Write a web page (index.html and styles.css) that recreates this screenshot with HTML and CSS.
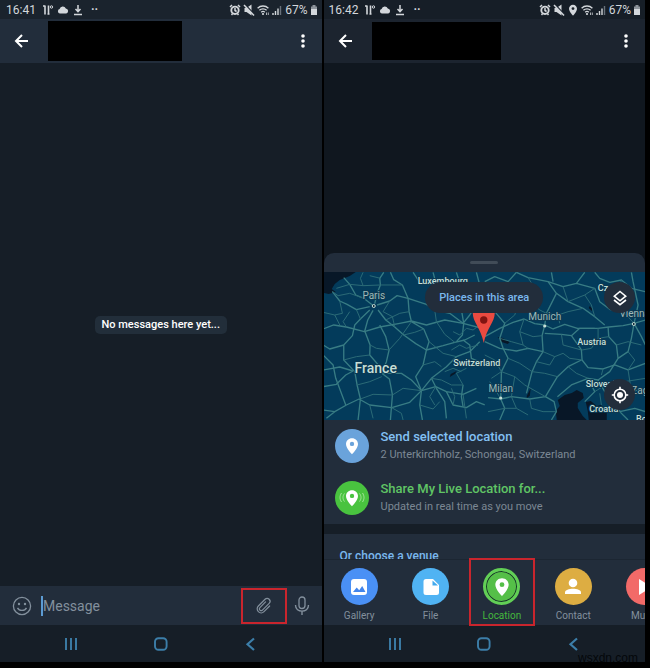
FILE: index.html
```
<!DOCTYPE html>
<html lang="en">
<head>
  <meta charset="UTF-8">
  <meta name="viewport" content="width=device-width, initial-scale=1.0">
  <title>Send location</title>
  <link rel="stylesheet" href="styles.css">
</head>
<body>

<!-- Shared icons -->
<svg class="sprite" aria-hidden="true">
  <symbol id="i-app" viewBox="0 0 12 12"><path d="M1 2h2M3 1.500v9M6.500 1.500v9M5.500 10h2" fill="none" stroke="currentColor" stroke-width="1.600"/><circle cx="9.500" cy="3" r="1.200" fill="none" stroke="currentColor"/></symbol>
  <symbol id="i-cloud" viewBox="0 0 12 12"><path d="M3 9.500a2.300 2.300 0 0 1-.4-4.500 3.300 3.300 0 0 1 6.200-.4A2.500 2.500 0 0 1 9.300 9.500z" fill="currentColor"/></symbol>
  <symbol id="i-down" viewBox="0 0 12 12"><path d="M6 1v6M3.500 5 6 7.600 8.500 5M2 10.500h8" fill="none" stroke="currentColor" stroke-width="1.500"/></symbol>
  <symbol id="i-alarm" viewBox="0 0 12 12"><circle cx="6" cy="6.300" r="3.700" fill="none" stroke="currentColor" stroke-width="1.900"/><path d="M6 4v2.500l1.600 1M1 3l2-2M11 3 9 1M2.500 11l1-1.200M9.500 11l-1-1.200" fill="none" stroke="currentColor" stroke-width="1.500"/></symbol>
  <symbol id="i-mute" viewBox="0 0 12 12"><path d="M1.500 4h2L8.500.5v11L3.500 8h-2z" fill="currentColor"/><path d="m2.500 1 9 9.500" stroke="#1a232d" stroke-width="1.400"/><path d="m1 1 10 10.500" stroke="currentColor" stroke-width="1.500"/></symbol>
  <symbol id="i-wifi" viewBox="0 0 12 12"><path d="M.6 4.300a7.500 7.500 0 0 1 10.800 0M2.400 6.300a5.100 5.100 0 0 1 7.200 0M4.200 8.200a2.600 2.600 0 0 1 3.600 0" fill="none" stroke="currentColor" stroke-width="1.300"/><circle cx="6" cy="10" r="1.100" fill="currentColor"/><path d="M9.500 8.500v2.500M11.300 8.500v2.500" stroke="currentColor" stroke-width=".8"/></symbol>
  <symbol id="i-signal" viewBox="0 0 12 12"><path d="M2 9v2M4.500 7v4M7 4.500V11" stroke="currentColor" stroke-width="1.400"/><path d="M9.500 2v9" stroke="#69717a" stroke-width="1.400"/></symbol>
  <symbol id="i-battery" viewBox="0 0 8 12"><path d="M1 2.500h1.500V1h3v1.500H7V11H1z" fill="#8d949b"/><path d="M1 5h6v6H1z" fill="currentColor"/></symbol>
  <symbol id="i-pin" viewBox="0 0 24 24"><path d="M12 1.500c-4.500 0-8 3.500-8 7.800C4 15 12 23 12 23s8-8 8-13.700c0-4.300-3.500-7.800-8-7.800zm0 10.600a2.900 2.900 0 1 1 0-5.800 2.900 2.900 0 0 1 0 5.800z" fill="currentColor"/></symbol>
  <symbol id="i-back" viewBox="0 0 16 16"><path d="M14 8H2.500M8 2 2 8l6 6" fill="none" stroke="currentColor" stroke-width="2"/></symbol>
  <symbol id="i-more" viewBox="0 0 6 16"><circle cx="3" cy="3" r="1.800" fill="currentColor"/><circle cx="3" cy="8" r="1.800" fill="currentColor"/><circle cx="3" cy="13" r="1.800" fill="currentColor"/></symbol>
  <symbol id="i-recent" viewBox="0 0 16 16"><path d="M3 2v12M8 2v12M13 2v12" stroke="currentColor" stroke-width="1.900"/></symbol>
  <symbol id="i-home" viewBox="0 0 16 16"><rect x="2" y="2.200" width="11.600" height="11.600" rx="3.500" fill="none" stroke="currentColor" stroke-width="1.900"/></symbol>
  <symbol id="i-chevron" viewBox="0 0 16 16"><path d="m11 2.500-6.500 5.700L11 14" fill="none" stroke="currentColor" stroke-width="2.200"/></symbol>
</svg>

<main class="screens">

  <section class="phone" aria-label="Empty chat">
    <div class="status">
      <span>16:41</span>
      <svg class="s-icon"><use href="#i-app"/></svg>
      <svg class="s-icon"><use href="#i-cloud"/></svg>
      <svg class="s-icon"><use href="#i-down"/></svg>
      <span class="dots">··</span>
      <div class="status-right">
        <svg class="s-icon"><use href="#i-alarm"/></svg>
        <svg class="s-icon"><use href="#i-mute"/></svg>
        <svg class="s-icon"><use href="#i-wifi"/></svg>
        <svg class="s-icon"><use href="#i-signal"/></svg>
        <span>67%</span>
        <svg class="s-icon battery"><use href="#i-battery"/></svg>
      </div>
    </div>
    <header class="topbar">
      <button class="icon-btn" aria-label="Back"><svg class="back"><use href="#i-back"/></svg></button>
      <div class="name"></div>
      <button class="icon-btn" aria-label="More options"><svg class="more"><use href="#i-more"/></svg></button>
    </header>
    <div class="chat">
      <p class="empty">No messages here yet...</p>
    </div>
    <form class="composer">
      <button type="button" class="icon-btn" aria-label="Emoji">
        <svg class="emoji" viewBox="0 0 20 20"><circle cx="10" cy="10" r="8.600" fill="none" stroke="currentColor" stroke-width="1.300"/><circle cx="7" cy="8" r="1.200" fill="currentColor"/><circle cx="13" cy="8" r="1.200" fill="currentColor"/><path d="M5.500 11.800c1.800 3.400 7.200 3.400 9 0" fill="none" stroke="currentColor" stroke-width="1.400"/></svg>
      </button>
      <input class="message" type="text" placeholder="Message" aria-label="Message">
      <button type="button" class="attach marked" aria-label="Attach">
        <svg class="clip" viewBox="0 0 20 20"><path d="M14 6v8a4 4 0 0 1-8 0V4.500a2.900 2.900 0 0 1 5.800 0V14a1.800 1.800 0 0 1-3.600 0V6" transform="rotate(45 10 10)" fill="none" stroke="currentColor" stroke-width="1.200" stroke-linecap="round"/></svg>
      </button>
      <button type="button" class="icon-btn" aria-label="Record voice">
        <svg class="mic" viewBox="0 0 16 20"><rect x="5" y="1" width="6" height="11.500" rx="3" fill="none" stroke="currentColor" stroke-width="1.300"/><path d="M1.500 9c0 8.200 13 8.200 13 0M8 15.500V19" fill="none" stroke="currentColor" stroke-width="1.400"/></svg>
      </button>
    </form>
    <nav class="navbar">
      <button aria-label="Recent apps"><svg><use href="#i-recent"/></svg></button>
      <button aria-label="Home"><svg><use href="#i-home"/></svg></button>
      <button aria-label="Back"><svg><use href="#i-chevron"/></svg></button>
    </nav>
  </section>

  <section class="phone dimmed" aria-label="Share location">
    <div class="status">
      <span>16:42</span>
      <svg class="s-icon"><use href="#i-app"/></svg>
      <svg class="s-icon"><use href="#i-cloud"/></svg>
      <svg class="s-icon"><use href="#i-down"/></svg>
      <span class="dots">··</span>
      <div class="status-right">
        <svg class="s-icon"><use href="#i-alarm"/></svg>
        <svg class="s-icon"><use href="#i-mute"/></svg>
        <svg class="s-icon"><use href="#i-pin"/></svg>
        <svg class="s-icon"><use href="#i-wifi"/></svg>
        <svg class="s-icon"><use href="#i-signal"/></svg>
        <span>67%</span>
        <svg class="s-icon battery"><use href="#i-battery"/></svg>
      </div>
    </div>
    <header class="topbar">
      <button class="icon-btn" aria-label="Back"><svg class="back"><use href="#i-back"/></svg></button>
      <div class="name short"></div>
      <button class="icon-btn" aria-label="More options"><svg class="more"><use href="#i-more"/></svg></button>
    </header>
    <div class="chat"></div>

    <div class="sheet">
      <div class="grip"></div>
      <div class="map">
        <svg class="map-canvas" viewBox="0 0 322 148" preserveAspectRatio="xMidYMid slice" role="img" aria-label="Map of central Europe">
          <rect width="322" height="148" fill="#033b5b"/>
          <!-- sea and lakes -->
          <g fill="#081727">
            <path d="M0 0h32l-6 4-10 4-5 4-3 5 4 3-7 2-5-1z"/>
            <path d="m234 128 7-5 7-2 5-3 6 3 1 5-6 5 0 5 5 8 4 4h-30l-1-9 4-5z"/>
            <path d="m262 130 5-1 6 5 4-1 6 5v10h-18l-1-9z"/>
            <path d="m174 65 5 1 7 4-2 2-6-2zM203 124l4-8-1 8-3 2zM266 34l3 3-1 2-3-3zM127 102l6-3-2 3-5 3z"/>
          </g>
          <!-- western roads -->
          <g class="roads" transform="translate(-4 -27) scale(.3333)">
            <path d="M162 183 132 160 108 150 90 118 72 98M165 176 172 145 182 120 180 100 192 82M172 180 210 168 232 152 265 160 320 178 345 195 390 205 430 235 495 252"/>
            <path d="M265 160 248 120 222 104 212 82M175 195 198 225 225 246 252 270 288 296 320 315 370 302 405 292 435 285 465 270M160 196 144 225 135 258 151 300 150 330 180 365 186 385 209 402 218 450 212 525"/>
            <path d="M150 185 110 194 82 178 60 168 38 140M150 195 122 222 105 240 98 272 72 300 30 312 10 300M72 300 72 345 105 380 112 420 122 462 115 525"/>
            <path d="M10 252 42 240 80 246 134 260 180 246 240 235 275 228 320 240 375 225 430 235M265 160 268 200 275 230 312 252 328 290 320 315 310 360 288 395 305 437 300 480 308 525"/>
            <path d="M180 240 198 275 208 315 200 350 185 385M10 375 60 366 100 378M180 385 245 385 275 405 305 437 335 400 380 365 410 335 450 320 480 290"/>
            <path d="M305 437 270 472 216 488 150 480 118 462 80 480 45 500 10 495M305 437 348 425 380 440 430 448 470 430M10 425 50 418 78 390 100 378M45 500 20 520"/>
            <path d="M410 82 422 120 420 165 432 235 428 270 410 290M430 235 450 210 470 180 480 120 470 82M340 82 350 120 300 112 280 82M335 400 350 430 375 470 380 520M380 440 400 480 440 488 470 470 495 480"/>
            <path d="M430 285 450 300 455 340 490 355M430 420 425 455 430 485M10 330 40 360 48 400 78 480"/>
            <g class="minor">
              <path d="M50 130 90 118 130 122 182 120 248 120M38 140 55 152 90 145 132 160M90 200 70 230 80 246M10 202 45 210 60 240M60 168 68 205 45 210M110 194 122 222M198 225 240 205 268 200M130 122 122 100 130 82M182 100 150 92"/>
              <path d="M225 246 218 215 190 200 210 168M275 230 240 280 208 315 170 310 151 300M252 270 285 262 312 252M328 290 370 325 410 335M345 195 350 230 375 268 405 292M390 205 380 170 400 150 420 165 450 150M72 345 110 335 150 330"/>
              <path d="M112 420 150 410 186 395M122 462 160 448 218 450 250 430 305 437M216 488 245 505 250 525M150 480 160 520M300 480 340 492 360 470M310 360 345 350 365 365M335 400 365 405 395 420 430 420 410 385 440 370M348 425 330 455 345 480M400 260 420 270 440 250 460 255 480 240M395 315 420 300 440 310 475 300M375 380 400 370 425 380M430 448 440 520M395 430 405 455 400 480"/>
            </g>
          </g>
          <!-- eastern roads -->
          <g class="roads" transform="translate(161 -27) scale(.3333)">
            <path d="M95 82 130 98 190 110 215 145 200 175 185 205 180 240 150 236 118 222 85 232 45 250 0 275M180 240 205 252 240 238 278 250 340 250 372 246 415 242 448 235 482 225"/>
            <path d="M215 145 250 170 295 190 330 215 360 240M190 110 235 125 275 115 300 82M275 115 330 130 345 170 378 195M330 82 345 100 375 112 410 105 440 130 482 140"/>
            <path d="M180 240 172 272 175 320 155 350 142 380 125 445M175 320 130 310 95 318 45 310 0 290M180 265 230 268 260 272 290 315 292 345 310 368 355 372 390 360 430 375 482 355"/>
            <path d="M260 272 285 250 330 250M290 345 250 365 218 395 200 425 182 455 135 462 80 455 48 462 10 458M48 462 60 490 45 525M182 455 208 470 215 500 200 525M218 455 260 420 310 400 340 405 375 380 400 340 395 300 372 275 370 246"/>
            <path d="M310 400 330 440 300 470M340 405 360 440 400 470 440 440 482 430M400 340 430 320 440 280 448 235M400 470 405 500 430 525M405 500 450 490 482 500M0 180 30 200 60 235 45 280 55 310 70 340 50 380 48 462"/>
            <path d="M0 110 30 95 70 110 95 82M200 82 205 110M440 82 445 110 460 180 448 235 470 275 482 300"/>
            <g class="minor">
              <path d="M60 235 90 210 100 180 130 165 150 130 130 98M100 180 60 165 30 200M130 165 165 195 185 205M185 205 220 210 250 200 295 190M220 210 225 235M235 125 250 170 300 150 330 130M300 150 320 180 330 215"/>
              <path d="M118 222 105 260 115 300 130 310M105 260 145 275 172 272M45 280 80 290 115 300M175 320 210 335 235 325 255 340 292 345M210 335 195 360 155 350M142 380 180 385 218 395M70 340 105 355 142 380M0 330 30 345 50 380 20 400M50 380 90 395 120 420 182 455"/>
              <path d="M230 268 235 300 290 315M340 250 340 280 320 310 292 315M340 280 372 275M395 300 430 290 470 300M430 320 450 345 430 375 440 440M355 372 350 390M250 365 275 385 310 400M90 395 80 455M15 410 35 440 48 462M80 455 95 490 130 510M135 462 140 490 175 500 215 500M60 490 95 490M10 500 60 490M330 440 370 415 420 410 482 400M345 445 350 480M378 195 420 205 448 235M410 105 400 150 378 195"/>
            </g>
          </g>
          <g class="labels">
            <circle cx="50" cy="34" r="1.500" class="ring"/>
            <circle cx="221" cy="54" r="1.600"/>
            <circle cx="177" cy="126" r="1.600"/>
            <circle cx="310" cy="52" r="1.500" class="ring"/>
            <text x="50" y="27" class="city">Paris</text>
            <text x="221" y="48" class="city">Munich</text>
            <text x="177" y="120" class="city">Milan</text>
            <text x="311" y="45" class="city">Vienna</text>
            <text x="316" y="122" class="city">Zag</text>
            <text x="119" y="12">Luxembourg</text>
            <text x="153" y="94">Switzerland</text>
            <text x="268" y="73">Austria</text>
            <text x="290" y="19">Czechia</text>
            <text x="279" y="115">Slovenia</text>
            <text x="280" y="140">Croatia</text>
            <text x="326" y="150">Bosnia</text>
            <text x="52" y="101" class="big">France</text>
          </g>
          <g class="marker">
            <path d="M160 30c-6 0-11 5-11 11 0 9 8 15 11 30 3-15 11-21 11-30 0-6-5-11-11-11z" fill="#ea4a40"/>
            <circle cx="160" cy="48" r="3.700" fill="#811411"/>
          </g>
        </svg>
        <button class="places">Places in this area</button>
        <button class="map-btn layers" aria-label="Map layers">
          <svg viewBox="0 0 18 18"><path d="m9 2.500 5.700 4.700L9 11.800 3.300 7.200zM3 11l6 4.700 6-4.700" fill="none" stroke="currentColor" stroke-width="1.600"/></svg>
        </button>
        <button class="map-btn locate" aria-label="My location">
          <svg viewBox="0 0 18 18"><circle cx="9" cy="9" r="5.800" fill="none" stroke="currentColor" stroke-width="1.600"/><circle cx="9" cy="9" r="3" fill="currentColor"/><path d="M9 .8v3M9 14.200v3M.8 9h3M14.200 9h3" stroke="currentColor" stroke-width="1.600"/></svg>
        </button>
      </div>

      <div class="options">
        <button class="option">
          <span class="badge blue"><svg><use href="#i-pin"/></svg></span>
          <span class="option-text">
            <strong>Send selected location</strong>
            <small>2 Unterkirchholz, Schongau, Switzerland</small>
          </span>
        </button>
        <button class="option live">
          <span class="badge green">
            <svg class="waves" viewBox="0 0 34 34"><path d="M9.500 12.500c-2 2.500-2 5.500 0 8M24.500 12.500c2 2.500 2 5.500 0 8M6.500 12c-2 3-2 6 0 9M27.500 12c2 3 2 6 0 9" fill="none" stroke="#a5e59b" stroke-width="1"/></svg>
            <svg><use href="#i-pin"/></svg>
          </span>
          <span class="option-text">
            <strong>Share My Live Location for...</strong>
            <small>Updated in real time as you move</small>
          </span>
        </button>
      </div>

      <h2 class="venue">Or choose a venue</h2>

      <div class="tabs">
        <button class="tab">
          <span class="disc gallery"><svg viewBox="0 0 20 20"><rect x="2" y="2" width="16" height="16" rx="3" fill="#fff"/><path d="m4 15 3.700-4.500 2.500 2.800 3-4.300 3.300 6z" fill="#4285ec"/></svg></span>
          Gallery
        </button>
        <button class="tab">
          <span class="disc file"><svg viewBox="0 0 20 20"><path d="M5 2h7l6 6v7.500a2.500 2.500 0 0 1-2.500 2.500H5a2.500 2.500 0 0 1-2.500-2.500v-11A2.500 2.500 0 0 1 5 2z" fill="#fff"/><path d="M11.500 3.500v5H17z" fill="#42a9ed"/></svg></span>
          File
        </button>
        <button class="tab active marked">
          <span class="disc location"><svg><use href="#i-pin"/></svg></span>
          Location
        </button>
        <button class="tab">
          <span class="disc contact"><svg viewBox="0 0 20 20"><circle cx="10" cy="6" r="4.300" fill="#fff"/><path d="M2 17v-1.500c0-5 16-5 16 0V17z" fill="#fff"/></svg></span>
          Contact
        </button>
        <button class="tab">
          <span class="disc music"><svg viewBox="0 0 20 20"><path d="M4 2v16l13-8z" fill="#fff"/></svg></span>
          Music
        </button>
      </div>
    </div>

    <nav class="navbar">
      <button aria-label="Recent apps"><svg><use href="#i-recent"/></svg></button>
      <button aria-label="Home"><svg><use href="#i-home"/></svg></button>
      <button aria-label="Back"><svg><use href="#i-chevron"/></svg></button>
    </nav>
  </section>

</main>

<div class="watermark">wsxdn.com</div>

</body>
</html>
```
FILE: styles.css
```
* {
  box-sizing: border-box;
}

body {
  margin: 0;
  background: #000;
  color: #fff;
  font-family: Roboto, "Liberation Sans", sans-serif;
  font-size: 12px;
}

button {
  padding: 0;
  border: none;
  background: none;
  color: inherit;
  font: inherit;
  cursor: pointer;
}

svg {
  display: block;
}

.sprite {
  position: absolute;
  width: 0;
  height: 0;
}

.screens {
  display: grid;
  grid-template-columns: minmax(0, 1fr) minmax(0, 1fr);
  gap: 2px;
  min-height: 100vh;
  padding: 0 5px 6px 0;
}

.phone {
  display: flex;
  flex-direction: column;
  background: #161e27;
}

.phone.dimmed {
  background: #10171f;
}

/* status bar */
.status {
  display: flex;
  align-items: center;
  gap: 3px;
  height: 19px;
  padding: 0 4px 0 6px;
  background: #1a232d;
  color: #d3d7db;
}

.dimmed .status {
  padding-left: 5px;
  background: #161e27;
}

.status > .s-icon:first-of-type {
  margin-left: 3px;
}

.status-right {
  display: flex;
  align-items: center;
  gap: 2px;
  margin-left: auto;
}

.s-icon {
  width: 12px;
  height: 12px;
}

.s-icon.battery {
  width: 8px;
}

.dots {
  margin-left: 4px;
  font-weight: 700;
}

/* chat header */
.topbar {
  display: flex;
  align-items: center;
  height: 44px;
  padding: 0 8px 0 4px;
  background: #222d3b;
}

.dimmed .topbar {
  background: #1c242f;
}

.icon-btn {
  display: grid;
  place-items: center;
  min-width: 22px;
}

.back {
  width: 16px;
  height: 16px;
}

.topbar .icon-btn:first-child {
  width: 36px;
}

.more {
  width: 6px;
  height: 16px;
}

.name {
  width: 134px;
  height: 40px;
  margin: 0 auto 0 8px;
  background: #000;
}

.name.short {
  width: 129px;
  height: 38px;
}

.chat {
  flex: 1;
  display: grid;
  place-items: center;
}

.empty {
  margin: 0;
  padding: 0 7px;
  border-radius: 5px;
  background: #222e3a;
  font-size: 11px;
  font-weight: 500;
  line-height: 18px;
}

/* message field */
.composer {
  display: flex;
  align-items: center;
  height: 39px;
  padding: 0 9px 0 11px;
  background: #222d3b;
  color: #83909d;
}

.emoji {
  width: 20px;
  height: 20px;
}

.message {
  flex: 1;
  min-width: 0;
  height: 20px;
  margin-left: 8px;
  padding: 0;
  border: none;
  border-left: 2px solid #5c9bd3;
  outline: none;
  background: none;
  color: #fff;
  font: 14px Roboto, "Liberation Sans", sans-serif;
}

.message::placeholder {
  color: #83909d;
  opacity: 1;
}

.attach {
  display: grid;
  place-items: center;
  width: 46px;
  height: 36px;
  margin-right: 4px;
}

.attach.marked {
  border: 2px solid #c9252d;
}

.clip {
  width: 20px;
  height: 20px;
}

.mic {
  width: 16px;
  height: 20px;
}

/* system navigation */
.navbar {
  display: flex;
  justify-content: space-between;
  align-items: center;
  height: 37px;
  padding: 0 60px;
  background: #161e27;
  color: #3c7ea9;
}

.navbar button {
  padding: 8px 3px;
}

.navbar svg {
  width: 16px;
  height: 16px;
}

/* attachment sheet */
.sheet {
  border-radius: 10px 10px 0 0;
  background: #222d3b;
}

.grip {
  width: 28px;
  height: 3px;
  margin: 0 auto;
  border-radius: 2px;
  background: #414c58;
}

.sheet > .grip {
  margin: 8px auto;
}

.map {
  position: relative;
  height: 148px;
  overflow: hidden;
}

.map-canvas {
  width: 100%;
  height: 100%;
}

.roads {
  fill: none;
  stroke: #387c84;
  stroke-width: 4;
  stroke-linejoin: round;
}

.roads .minor {
  stroke: #2b6a76;
  stroke-width: 3;
}

.labels {
  fill: #c6dfd7;
  font-size: 9px;
  font-weight: 500;
  text-anchor: middle;
}

.labels text {
  paint-order: stroke;
  stroke: #0b3852;
  stroke-width: 2px;
}

.labels .city {
  fill: #9fb8b7;
  font-size: 10px;
  font-weight: 400;
}

.labels .big {
  font-size: 14px;
}

.ring {
  fill: #0b2033;
  stroke: #c6dfd7;
}

.places {
  position: absolute;
  top: 10px;
  left: 50%;
  height: 31px;
  padding: 0 14px;
  border-radius: 16px;
  background: #222d3b;
  color: #7ab8ee;
  font-size: 11px;
  font-weight: 500;
  white-space: nowrap;
  transform: translateX(-50%);
}

.map-btn {
  position: absolute;
  right: 10px;
  display: grid;
  place-items: center;
  width: 31px;
  height: 31px;
  border-radius: 50%;
  background: #222d3b;
}

.map-btn svg {
  width: 18px;
  height: 18px;
}

.layers {
  top: 10px;
}

.locate {
  bottom: 10px;
}

.options {
  border-bottom: 10px solid #161e27;
}

.option {
  display: flex;
  align-items: center;
  gap: 12px;
  width: 100%;
  height: 52px;
  padding: 0 11px;
  text-align: left;
}

.badge {
  position: relative;
  display: grid;
  place-items: center;
  flex: none;
  width: 34px;
  height: 34px;
  border-radius: 50%;
}

.badge svg {
  width: 18px;
  height: 18px;
}

.badge .waves {
  position: absolute;
  inset: 0;
  width: 34px;
  height: 34px;
}

.blue {
  background: #6aa3db;
}

.green {
  background: #49c33f;
}

.option-text strong,
.option-text small {
  display: block;
}

.option-text strong {
  color: #82c0f4;
  font-size: 13px;
  font-weight: 500;
  line-height: 18px;
}

.option-text small {
  color: #7c8894;
  font-size: 11px;
  line-height: 18px;
}

.option.live strong {
  color: #60c565;
}

.venue {
  height: 25px;
  margin: 0;
  padding: 14px 16px 0;
  overflow: hidden;
  color: #7ab8ee;
  font-size: 12px;
  font-weight: 500;
  line-height: 16px;
}

/* attachment types */
.tabs {
  display: flex;
  height: 66px;
  overflow-x: clip;
  border-top: 1px solid #1c2632;
}

.tab {
  position: relative;
  display: flex;
  flex: 0 0 22.2%;
  flex-direction: column;
  align-items: center;
  gap: 4px;
  padding-top: 8px;
  color: #83909d;
  font-size: 10px;
  line-height: 14px;
}

.tab.active {
  color: #45b83d;
}

.tab.marked::after {
  content: "";
  position: absolute;
  inset: -2px 3px -1px;
  border: 2px solid #c9252d;
}

.disc {
  display: grid;
  place-items: center;
  width: 37px;
  height: 37px;
  border-radius: 50%;
  color: #fff;
}

.disc svg {
  width: 20px;
  height: 20px;
}

.gallery {
  background: #4a90f5;
}

.file {
  background: #50b3f3;
}

.location {
  border: 3px solid #62cf56;
  background: #55bf48;
  box-shadow: inset 0 0 0 1px #18352b;
}

.contact {
  background: #ddad42;
}

.music {
  background: #f26a68;
}

.watermark {
  position: absolute;
  right: 12px;
  bottom: 2px;
  color: #04070a;
  font: 12px/16px "Liberation Sans", sans-serif;
}
```
